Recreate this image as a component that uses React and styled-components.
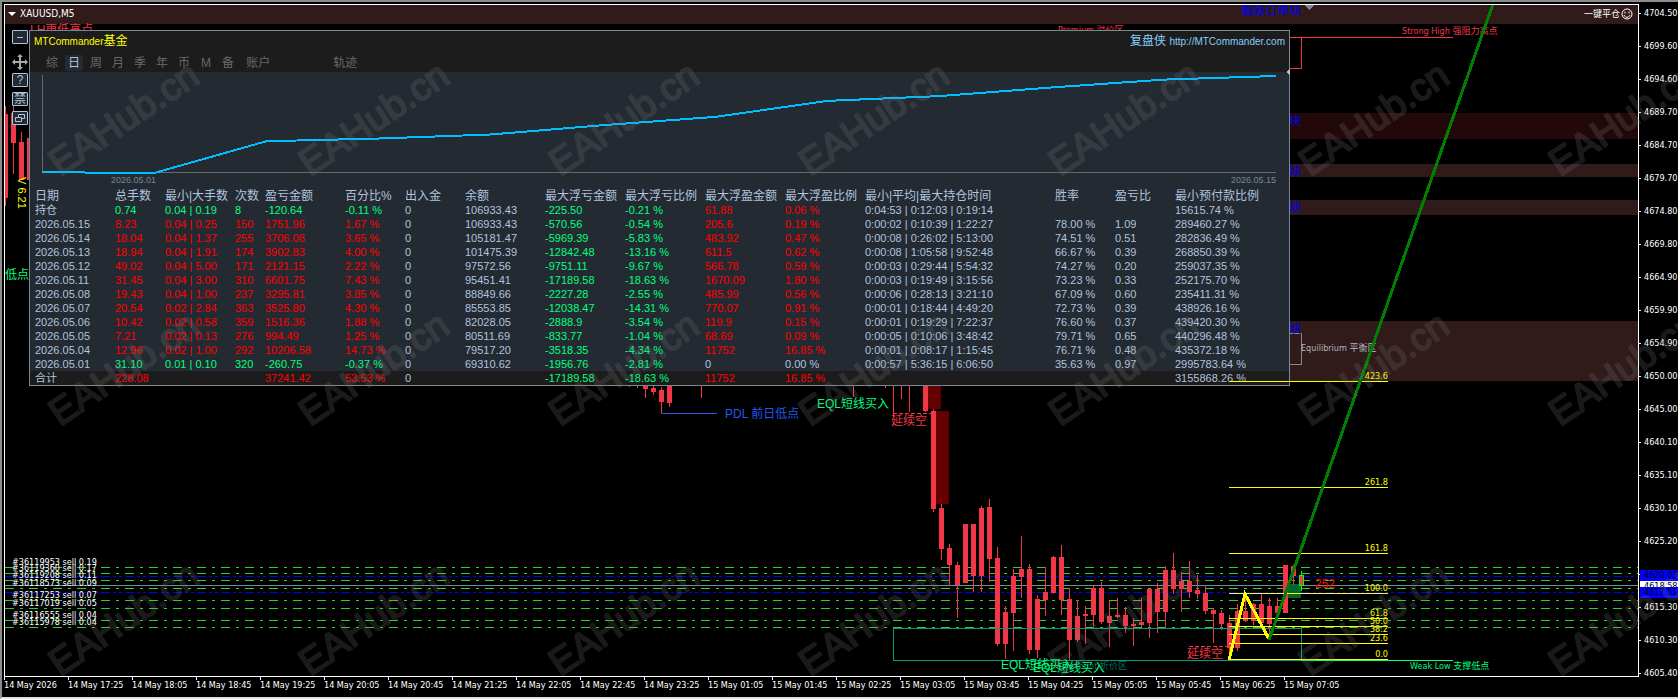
import React from 'react'
import styled, { createGlobalStyle } from 'styled-components'

const uiFont = '"DejaVu Sans Condensed", "Noto Sans CJK SC", sans-serif'
const textFont = '"Liberation Sans", "Noto Sans CJK SC", sans-serif'

const colors = {
  up: '#00ff7f',
  down: '#ff0000',
  text: '#b0c4de',
  muted: '#696969',
  slate: '#778899',
  candle: '#f23645',
  panel: '#242a32',
  bar: '#1c1c1c',
}

const GlobalStyle = createGlobalStyle`
  * {
    box-sizing: border-box;
  }
  body {
    margin: 0;
    background: #000;
    color: #fff;
    font-family: ${textFont};
  }
  button {
    padding: 0;
    border: 0;
    background: none;
    color: inherit;
    font: inherit;
    cursor: pointer;
  }
`

const Terminal = styled.main`
  position: relative;
  display: grid;
  grid-template-columns: minmax(0, 1fr) 39px;
  grid-template-rows: minmax(0, 1fr) 19px;
  min-height: 100vh;
  padding: 2px 0 1px 2px;
  border: solid #8c8c8c;
  border-width: 2px 0 2px 2px;
  border-bottom-color: #e3e3e3;
  overflow: hidden;
`

const Plot = styled.section`
  position: relative;
  border: 1px solid #fff;
  overflow: hidden;
`

const Layer = styled.svg`
  position: absolute;
  top: 0;
  left: 0;
  width: 100%;
  height: 100%;
  pointer-events: none;
  font-family: ${textFont};
  font-size: 12px;
`

// starts at the corner of the window, so it shares its coordinates
const ChartLayer = styled(Layer)`
  top: -5px;
  left: -5px;
  width: calc(100% + 5px);
  height: calc(100% + 5px);
`

const SmallText = styled.text`
  font-family: ${uiFont};
  font-size: 9px;
`

const ChartHeader = styled.header`
  position: relative;
  display: flex;
  align-items: center;
  justify-content: space-between;
  height: 17px;
  padding: 0 5px 0 3px;
  font-family: ${uiFont};
  font-size: 10px;
`

const HeaderButton = styled.button`
  display: flex;
  align-items: center;
  gap: ${({ $gap }) => $gap}px;
  font-size: ${({ $size }) => $size}px;
`

const SideTools = styled.nav`
  position: absolute;
  top: 25px;
  left: 7px;
  display: flex;
  flex-direction: column;
  gap: 5px;
`

const ToolButton = styled.button`
  display: flex;
  align-items: center;
  justify-content: center;
  width: 16px;
  height: 14px;
  border: 1px solid ${colors.text};
  border-radius: 1px;
  background: ${colors.panel};
  color: ${colors.text};
  font-size: 12px;
  line-height: 12px;
`

const MoveButton = styled.button`
  display: flex;
  height: 16px;
  margin: 5px 0 -2px;
  color: #a9a9a9;
`

const Panel = styled.section`
  position: absolute;
  top: 25px;
  left: 24px;
  right: 348px;
  border: 1px solid ${colors.slate};
  background: ${colors.panel};
  color: ${colors.text};
`

const PanelTop = styled.div`
  height: 41px;
  background: ${colors.bar};
`

const TitleRow = styled.div`
  display: flex;
  align-items: center;
  justify-content: space-between;
  height: 21px;
  padding: 0 4px;
  color: #ff0;
  font-size: 12px;
  line-height: 18px;
`

const Latin = styled.span`
  font-size: 10px;
`

const SiteLink = styled.a`
  color: #87cefa;
  text-decoration: none;
`

const Tabs = styled.div`
  display: flex;
  gap: 4px;
  padding: 3px 13px 0;
`

const Tab = styled.button`
  min-width: 18px;
  height: 16px;
  padding: 0 3px;
  margin-left: ${({ $space }) => $space || 0}px;
  border-radius: 2px;
  background: ${({ $active }) => ($active ? colors.panel : 'transparent')};
  color: ${({ $active }) => ($active ? colors.text : colors.muted)};
  font-size: 12px;
  line-height: 16px;
`

const Equity = styled.figure`
  margin: 0;
  padding: 3px 13px 0 12px;
`

const EquityChart = styled.svg`
  display: block;
  width: 100%;
  height: 98px;
  overflow: visible;
`

const EquityDates = styled.figcaption`
  display: flex;
  justify-content: space-between;
  height: 16px;
  padding-left: 69px;
  color: ${colors.slate};
  font-size: 9px;
  line-height: 14px;
`

const Report = styled.table`
  width: 100%;
  table-layout: fixed;
  border-collapse: collapse;
  font-size: 11px;
  line-height: 14px;
  white-space: nowrap;

  th,
  td {
    height: 14px;
    padding: 0 0 0 5px;
    text-align: left;
    font-weight: 400;
  }
  th {
    font-size: 12px;
  }
  tfoot {
    background: ${colors.bar};
  }
`

const Value = styled.td`
  color: ${({ $color }) => $color || colors.text};
`

const PriceAxis = styled.aside`
  position: relative;
  grid-row: 1 / 3;
  grid-column: 2;
  display: flex;
  flex-direction: column;
  gap: 18px;
  padding-top: 2px;
  font-family: ${uiFont};
  font-size: 9px;
  line-height: 15px;
`

const Price = styled.span`
  display: flex;
  align-items: center;
  gap: 3px;
  white-space: nowrap;

  &::before {
    content: '';
    width: 2px;
    height: 1px;
    background: #fff;
  }
`

const PriceTag = styled.span`
  position: absolute;
  left: 1px;
  right: 0;
  top: ${({ $top }) => $top}px;
  height: 11px;
  padding-left: 4px;
  background: ${({ $bg }) => $bg};
  color: #000;
  line-height: 11px;
`

const TimeAxis = styled.footer`
  grid-row: 2;
  grid-column: 1;
  display: flex;
  font-family: ${uiFont};
  font-size: 9px;
  line-height: 11px;
`

const Time = styled.span`
  flex: 0 0 64px;
  white-space: nowrap;

  &::before {
    content: '';
    display: block;
    width: 1px;
    height: 3px;
    background: #fff;
  }
`

const columns = [
  ['日期', 80],
  ['总手数', 50],
  ['最小|大手数', 70],
  ['次数', 30],
  ['盈亏金额', 80],
  ['百分比%', 60],
  ['出入金', 60],
  ['余额', 80],
  ['最大浮亏金额', 80],
  ['最大浮亏比例', 80],
  ['最大浮盈金额', 80],
  ['最大浮盈比例', 80],
  ['最小|平均|最大持仓时间', 190],
  ['胜率', 60],
  ['盈亏比', 60],
  ['最小预付款比例'],
]

const rows = [
  ['持仓', '0.74', '0.04 | 0.19', '8', '-120.64', '-0.11 %', '0', '106933.43', '-225.50', '-0.21 %', '61.88', '0.06 %', '0:04:53 | 0:12:03 | 0:19:14', '', '', '15615.74 %'],
  ['2026.05.15', '8.23', '0.04 | 0.25', '150', '1751.96', '1.67 %', '0', '106933.43', '-570.56', '-0.54 %', '205.6', '0.19 %', '0:00:02 | 0:10:39 | 1:22:27', '78.00 %', '1.09', '289460.27 %'],
  ['2026.05.14', '18.04', '0.04 | 1.37', '255', '3706.08', '3.65 %', '0', '105181.47', '-5969.39', '-5.83 %', '483.92', '0.47 %', '0:00:08 | 0:26:02 | 5:13:00', '74.51 %', '0.51', '282836.49 %'],
  ['2026.05.13', '18.94', '0.04 | 1.91', '174', '3902.83', '4.00 %', '0', '101475.39', '-12842.48', '-13.16 %', '611.5', '0.62 %', '0:00:08 | 1:05:58 | 9:52:48', '66.67 %', '0.39', '268850.39 %'],
  ['2026.05.12', '49.02', '0.04 | 5.00', '171', '2121.15', '2.22 %', '0', '97572.56', '-9751.11', '-9.67 %', '566.78', '0.59 %', '0:00:03 | 0:29:44 | 5:54:32', '74.27 %', '0.20', '259037.35 %'],
  ['2026.05.11', '31.45', '0.04 | 3.00', '310', '6601.75', '7.43 %', '0', '95451.41', '-17189.58', '-18.63 %', '1670.09', '1.80 %', '0:00:03 | 0:19:49 | 3:15:56', '73.23 %', '0.33', '252175.70 %'],
  ['2026.05.08', '19.43', '0.04 | 1.00', '237', '3295.81', '3.85 %', '0', '88849.66', '-2227.28', '-2.55 %', '485.99', '0.56 %', '0:00:06 | 0:28:13 | 3:21:10', '67.09 %', '0.60', '235411.31 %'],
  ['2026.05.07', '20.54', '0.02 | 2.84', '363', '3525.80', '4.30 %', '0', '85553.85', '-12038.47', '-14.31 %', '770.07', '0.91 %', '0:00:01 | 0:18:44 | 4:49:20', '72.73 %', '0.39', '438926.16 %'],
  ['2026.05.06', '10.42', '0.02 | 0.58', '359', '1516.36', '1.88 %', '0', '82028.05', '-2888.9', '-3.54 %', '119.9', '0.15 %', '0:00:01 | 0:19:29 | 7:22:37', '76.60 %', '0.37', '439420.30 %'],
  ['2026.05.05', '7.21', '0.02 | 0.13', '276', '994.49', '1.25 %', '0', '80511.69', '-833.77', '-1.04 %', '68.69', '0.09 %', '0:00:05 | 0:10:06 | 3:48:42', '79.71 %', '0.65', '440296.48 %'],
  ['2026.05.04', '12.96', '0.02 | 1.00', '292', '10206.58', '14.73 %', '0', '79517.20', '-3518.35', '-4.34 %', '11752', '16.85 %', '0:00:01 | 0:08:17 | 1:15:45', '76.71 %', '0.48', '435372.18 %'],
  ['2026.05.01', '31.10', '0.01 | 0.10', '320', '-260.75', '-0.37 %', '0', '69310.62', '-1956.76', '-2.81 %', '0', '0.00 %', '0:00:57 | 5:36:15 | 6:06:50', '35.63 %', '0.97', '2995783.64 %'],
]

const total = ['合计', '228.08', '', '', '37241.42', '53.53 %', '0', '', '-17189.58', '-18.63 %', '11752', '16.85 %', '', '', '', '3155868.26 %']

const tabs = [
  ['综'], ['日'], ['周'], ['月'], ['季'], ['年'], ['币'], ['M'], ['备'], ['账户', 2], ['轨迹', 53],
]

const prices = [
  '4704.50', '4699.60', '4694.60', '4689.70', '4684.70', '4679.70', '4674.80',
  '4669.80', '4664.90', '4659.90', '4654.90', '4650.00', '4645.00', '4640.10',
  '4635.10', '4630.10', '4625.20', '', '4615.30', '4610.30', '4605.40',
]

const times = [
  '14 May 2026', '14 May 17:25', '14 May 18:05', '14 May 18:45', '14 May 19:25',
  '14 May 20:05', '14 May 20:45', '14 May 21:25', '14 May 22:05', '14 May 22:45',
  '14 May 23:25', '15 May 01:05', '15 May 01:45', '15 May 02:25', '15 May 03:05',
  '15 May 03:45', '15 May 04:25', '15 May 05:05', '15 May 05:45', '15 May 06:25',
  '15 May 07:05',
]

// [x, high, body top, body bottom, low]
const earlyCandles = [
  [3, 106, 114, 198, 206],
  [11, 105, 113, 143, 174],
  [19, 132, 142, 180, 180],
  [27, 138, 138, 180, 180],
  [643, 380, 380, 389, 398],
  [651, 386, 388, 392, 395],
  [659, 387, 390, 402, 414],
  [667, 380, 380, 403, 407],
  [923, 380, 380, 411, 412],
  [931, 409, 411, 509, 512],
]

// one candle per 8px, starting at x = 939: [high, body top, body bottom, low]
const lateCandles = [
  [504, 508, 549, 560], [544, 548, 565, 585], [562, 565, 585, 618], [524, 524, 583, 583],
  [524, 524, 576, 592], [506, 508, 576, 592], [499, 507, 559, 582], [547, 558, 644, 646],
  [606, 612, 644, 659], [569, 576, 613, 651], [536, 569, 577, 598], [564, 569, 650, 654],
  [595, 599, 650, 658], [567, 592, 600, 616], [556, 557, 593, 594], [545, 557, 600, 615],
  [588, 599, 640, 660], [600, 616, 640, 642], [606, 614, 616, 644], [586, 588, 615, 626],
  [582, 588, 622, 624], [601, 616, 623, 647], [598, 615, 617, 618], [607, 615, 626, 633],
  [618, 624, 626, 646], [598, 622, 625, 627], [589, 589, 623, 638], [583, 589, 612, 633],
  [566, 570, 612, 628], [553, 570, 589, 594], [572, 581, 589, 612], [561, 581, 592, 598],
  [575, 590, 594, 599], [586, 593, 611, 614], [608, 610, 614, 643], [610, 613, 624, 630],
  [615, 623, 648, 660], [604, 611, 648, 651], [592, 611, 621, 622], [603, 604, 621, 625],
  [593, 604, 623, 623], [598, 606, 624, 640], [598, 606, 613, 613], [565, 565, 613, 613],
  [565, 566, 576, 585],
]

const candles = [...earlyCandles, ...lateCandles.map((c, i) => [939 + i * 8, ...c])]

// wicks whose bodies are hidden by the panel: [x, low]
const wicks = [[629, 387], [637, 388], [701, 398], [853, 397], [885, 388], [893, 417], [901, 399], [909, 412]]

const zones = [
  [0, 4, 20, '#301a1a'],
  [1200, 113, 26, '#230809'],
  [1200, 164, 13, '#301a1a'],
  [1200, 200, 15, '#301a1a'],
  [1200, 321, 60, '#301a1a'],
]

const orders = [
  ['#36119953 sell 0.19', 567],
  ['#36119360 sell 0.17', 573],
  ['#36119208 sell 0.11', 580],
  ['#36118573 sell 0.09', 588],
  ['#36117253 sell 0.07', 600],
  ['#36117019 sell 0.05', 608],
  ['#36116555 sell 0.04', 620],
  ['#36115978 sell 0.04', 627],
]

const fibs = [
  ['423.6', 381], ['261.8', 487], ['161.8', 553], ['100.0', 593], ['61.8', 618],
  ['50.0', 626], ['38.2', 634], ['23.6', 643], ['0.0', 659],
]

// growth per day in percent, oldest first
const growth = [0, -0.37, 14.73, 1.25, 1.88, 4.3, 3.85, 7.43, 2.22, 4, 3.65, 1.67]

const equityPoints = () => {
  let sum = 0
  const sums = growth.map(item => (sum += item))
  const min = Math.min(...sums)
  const max = Math.max(...sums)
  return sums
    .map((item, i) => `${(i * 1234) / (sums.length - 1)},${98 - ((item - min) / (max - min)) * 97}`)
    .join(' ')
}

const valueColor = (row, i) => {
  if (i === 0 || i === 6 || i === 7 || i > 11) return colors.text
  const value = i < 6 ? row[4] : row[i]
  if (parseFloat(value) === 0) return colors.text
  return value.startsWith('-') ? colors.up : colors.down
}

const Row = ({ row }) => (
  <tr>
    {row.map((value, i) => (
      <Value key={i} $color={valueColor(row, i)}>{value}</Value>
    ))}
  </tr>
)

const Candle = ({ candle: [x, high, top, bottom, low] }) => (
  <g fill={colors.candle}>
    <rect x={x + 2} y={high} width="1" height={low - high} />
    <rect x={x} y={top} width="5" height={bottom - top} />
  </g>
)

const HLine = ({ y, ...props }) => (
  <line x1="5" x2="100%" y1={y + 0.5} y2={y + 0.5} {...props} />
)

const PriceChart = () => (
  <ChartLayer aria-label="XAUUSD M5">
    <g shapeRendering="crispEdges">
      {zones.map(([x, y, height, fill]) => (
        <rect key={y} x={x} y={y} width="100%" height={height} fill={fill} />
      ))}
      {orders.map(([label, y]) => (
        <HLine key={label} y={y} stroke="#32cd32" strokeDasharray="9 6 3 6" />
      ))}
      <HLine y={576} stroke="#00f" strokeDasharray="9 3 3 3 3 3" />
      <HLine y={592} stroke="#00f" strokeDasharray="9 3 3 3 3 3" />
      <HLine y={585} stroke={colors.slate} />
      <rect x="928" y="380" width="13" height="29" fill="#640000" />
      <rect x="936" y="411" width="13" height="93" fill="#640000" />
      <rect x="1287" y="584" width="14" height="14" fill="#00662f" />
      {wicks.map(([x, low]) => (
        <rect key={x} x={x} y="380" width="1" height={low - 380} fill={colors.candle} />
      ))}
      {candles.map(candle => <Candle key={candle[0]} candle={candle} />)}
      <rect x="1301" y="571" width="1" height="20" fill="#0f0" />
      <rect x="1299" y="575" width="5" height="11" fill="#0f0" />
      <rect x="1300" y="576" width="3" height="9" fill={colors.candle} />
      <rect x="893.5" y="628.5" width="408" height="32" fill="none" stroke="#089981" />
      <line x1="661" y1="413.5" x2="717" y2="413.5" stroke="#2157f3" />
      <line x1="893" y1="413.5" x2="932" y2="413.5" stroke={colors.candle} strokeDasharray="4 2" />
      <line x1="1189" y1="646.5" x2="1229" y2="646.5" stroke={colors.candle} strokeDasharray="4 2" />
      <line x1="1301" y1="660.5" x2="1453" y2="660.5" stroke="#00ff7f" />
      <path d="M1290 37.5H1453M1301.5 37.5V68.5H1290" fill="none" stroke={colors.candle} />
      <path d="M1290 333.5H1301.5V364.5H1290" fill="none" stroke="#868993" />
      <path d="M1304 5h10l-5 5z" fill={colors.slate} />
    </g>

    <g fill="#00f">
      {[15, 125, 176, 212, 333].map(y => <text key={y} x="1241" y={y}>看跌订单块</text>)}
    </g>
    <g fill={colors.candle}>
      <text x="30" y="34">LH更低高点</text>
      <text x="891" y="425">延续空</text>
      <text x="1187" y="658">延续空</text>
      <SmallText x="1058" y="33">Premium 溢价区</SmallText>
      <SmallText x="1402" y="34">Strong High 强阻力高点</SmallText>
    </g>
    <SmallText x="1127" y="669" textAnchor="end" fill="#077263">Discount 折价区</SmallText>
    <g fill="#00ff7f">
      <text x="5" y="279">低点</text>
      <text x="817" y="408">EQL短线买入</text>
      <text x="1001" y="669">EQL短线买入</text>
      <text x="1033" y="672">EQL短线买入</text>
      <SmallText x="1410" y="669">Weak Low 支撑低点</SmallText>
    </g>
    <SmallText x="1301" y="351" fill="#b2b5be">Equilibrium 平衡区</SmallText>
    <text x="725" y="418" fill="#2157f3">PDL 前日低点</text>
    <text x="1315" y="588" fill="#f00">252</text>
    <text transform="translate(18 177) rotate(90)" fill="#ff0" fontSize="11">V 6.21</text>
    {orders.map(([label, y]) => (
      <SmallText key={label} x="12" y={y - 2} fill="#fff">{label}</SmallText>
    ))}
  </ChartLayer>
)

const Drawings = () => (
  <ChartLayer>
    <g shapeRendering="crispEdges">
      {fibs.map(([label, y]) => (
        <g key={label}>
          <line x1="1229" x2="1388" y1={y + 0.5} y2={y + 0.5} stroke="#ff0" />
          <SmallText x="1388" y={y - 2} textAnchor="end" fill="#ff0">{label}</SmallText>
        </g>
      ))}
      <polyline points="1229,660 1245,594 1269,639" fill="none" stroke="#ff0" strokeWidth="3" />
      <line x1="1269" y1="640" x2="1493" y2="4" stroke="#008000" strokeWidth="3" />
      <path d="M1290 68v8l-4-4z" fill="#c0c0c0" />
    </g>
  </ChartLayer>
)

const Tools = () => (
  <SideTools aria-label="工具">
    <ToolButton aria-label="最小化">
      <svg width="8" height="8" stroke="currentColor"><path d="M1 4.5h6" /></svg>
    </ToolButton>
    <MoveButton aria-label="移动">
      <svg width="16" height="16" viewBox="0 0 16 16" fill="currentColor">
        <path d="M8 0l3 3H9v4h4V5l3 3-3 3V9H9v4h2l-3 3-3-3h2V9H3v2L0 8l3-3v2h4V3H5z" />
      </svg>
    </MoveButton>
    <ToolButton>?</ToolButton>
    <ToolButton>禁</ToolButton>
    <ToolButton aria-label="还原">
      <svg width="10" height="10" fill="none" stroke="currentColor">
        <path d="M3.5 4.5v-3h6v4h-3M.5 4.5h6v4h-6z" />
      </svg>
    </ToolButton>
  </SideTools>
)

const ReportPanel = () => {
  const [active, setActive] = React.useState('日')

  return (
    <Panel>
      <PanelTop>
        <TitleRow>
          <span><Latin>MTCommander</Latin>基金</span>
          <SiteLink href="http://MTCommander.com">复盘侠 <Latin>http://MTCommander.com</Latin></SiteLink>
        </TitleRow>
        <Tabs>
          {tabs.map(([label, space]) => (
            <Tab key={label} $space={space} $active={label === active} onClick={() => setActive(label)}>
              {label}
            </Tab>
          ))}
        </Tabs>
      </PanelTop>
      <Equity>
        <EquityChart viewBox="0 0 1234 98" preserveAspectRatio="none" shapeRendering="crispEdges">
          <path d="M.5 0V97.5H1234" fill="none" stroke={colors.muted} vectorEffect="non-scaling-stroke" />
          <polyline
            points={equityPoints()}
            fill="none"
            stroke="#00bfff"
            strokeWidth="2"
            vectorEffect="non-scaling-stroke"
          />
        </EquityChart>
        <EquityDates>
          <span>2026.05.01</span>
          <span>2026.05.15</span>
        </EquityDates>
      </Equity>
      <Report>
        <colgroup>
          {columns.map(([label, width]) => <col key={label} width={width} />)}
        </colgroup>
        <thead>
          <tr>
            {columns.map(([label]) => <th key={label}>{label}</th>)}
          </tr>
        </thead>
        <tbody>
          {rows.map(row => <Row key={row[0]} row={row} />)}
        </tbody>
        <tfoot>
          <Row row={total} />
        </tfoot>
      </Report>
    </Panel>
  )
}

const Watermark = () => (
  <Layer>
    <defs>
      <pattern id="mark" width="250" height="250" patternUnits="userSpaceOnUse">
        <text
          transform="translate(58 175) rotate(-34)"
          fill="#808080"
          stroke="#808080"
          strokeWidth="2"
          strokeLinejoin="round"
          fontSize="38"
        >
          EAHub.cn
        </text>
      </pattern>
    </defs>
    <rect width="100%" height="100%" fill="url(#mark)" opacity="0.2" />
  </Layer>
)

export default function App() {
  return (
    <>
      <GlobalStyle />
      <Terminal>
        <Plot>
          <PriceChart />
          <ChartHeader>
            <HeaderButton $gap={4} $size={10}>
              <svg width="8" height="4" fill="#fff"><path d="M0 0h8L4 4z" /></svg>
              XAUUSD,M5
            </HeaderButton>
            <HeaderButton $gap={1} $size={9}>
              一键平仓
              <svg width="12" height="12" fill="none" stroke="#fff">
                <circle cx="6" cy="6" r="5" />
                <path d="M4 3.5v2M8 3.5v2M3 7c1 3 5 3 6 0" />
              </svg>
            </HeaderButton>
          </ChartHeader>
          <Tools />
          <ReportPanel />
          <Drawings />
        </Plot>
        <PriceAxis>
          {prices.map((price, i) => <Price key={i}>{price || '\u00a0'}</Price>)}
          <PriceTag $top={577} $bg="#fff">4618.58</PriceTag>
          <PriceTag $top={566} $bg="#00f">4620.03</PriceTag>
          <PriceTag $top={583} $bg="#00f">4617.51</PriceTag>
        </PriceAxis>
        <TimeAxis>
          {times.map(time => <Time key={time}>{time}</Time>)}
        </TimeAxis>
        <Watermark />
      </Terminal>
    </>
  )
}
